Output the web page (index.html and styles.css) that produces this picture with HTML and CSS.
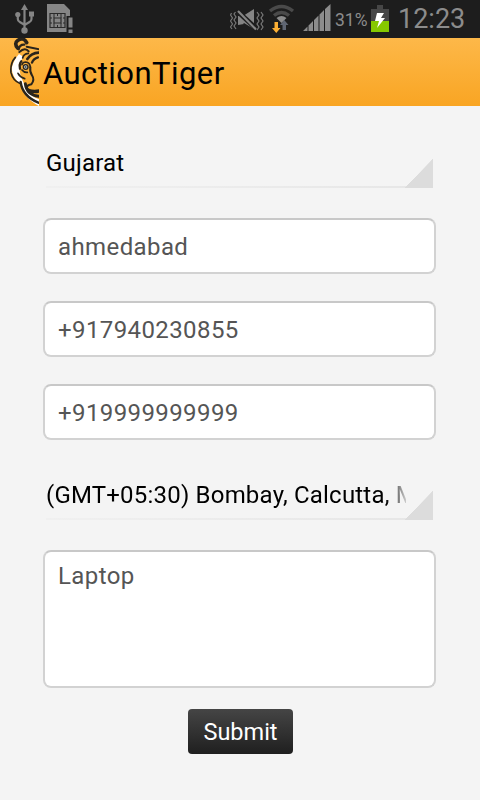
FILE: index.html
```html
<!DOCTYPE html>
<html lang="en">
<head>
    <meta charset="UTF-8">
    <meta name="viewport" content="width=device-width, initial-scale=1.0">
    <title>AuctionTiger</title>
    <link rel="stylesheet" href="styles.css">
</head>
<body>
    <div class="status-bar">
        <svg class="usb" width="20" height="30" viewBox="0 0 20 30">
            <g fill="none" stroke="#858585" stroke-width="2.2">
                <path d="M9.500 4v21M2.800 11v4q0 2 2 3l5 3M16.500 9v6q0 2-2 3l-5 3"/>
            </g>
            <g fill="#858585">
                <path d="M9.500 0l3.500 6h-7z"/>
                <circle cx="2.800" cy="10.500" r="2.600"/>
                <path d="M14 7.500h5v5h-5z"/>
                <circle cx="9.500" cy="26.500" r="3.200"/>
            </g>
        </svg>
        <svg class="sim" width="27" height="30" viewBox="0 0 27 30">
            <path d="M0 0h17l6 6v6h-3.500v16h-19.500z" fill="#858585"/>
            <path d="M3 9.500h15v14h-15z" fill="none" stroke="#2b2b2b" stroke-width="1.200"/>
            <path d="M7 14h7v5h-7z" fill="none" stroke="#2b2b2b" stroke-width="1.200"/>
            <path d="M7 9.500v4.500M10.500 9.500v2.500M14 9.500v4.500M7 19v4.500M10.500 21v2.500M14 19v4.500M3 14h2M3 19h2M16 14h2M16 19h2" fill="none" stroke="#2b2b2b"/>
            <path d="M21.500 13.500h4v10h-4zM21.500 25.500h4v3.500h-4z" fill="#858585"/>
        </svg>
        <span class="spacer"></span>
        <svg class="vibrate" width="34" height="24" viewBox="0 0 34 24">
            <path d="M8 7h5l11-7v20l-10-6h-6z" fill="#858585"/>
            <path d="M6 1l20 18.500" stroke="#1d1d1d" stroke-width="5"/>
            <path d="M8 2l18 18.500" stroke="#858585" stroke-width="2.200"/>
            <path d="M8 8v8l6-1z" fill="#858585"/>
            <path d="M1.500 4l-1 2 2 3-2 3 2 3-2 3 1.500 2M5.500 3l-1.500 2 2 3-2 3 2 3-2 3 2 3M27 3l2 3-2 3 2 3-2 3 2 3-2 3M31 3l2 3-2 3 2 3-2 3 2 3-2 3" fill="none" stroke="#777" stroke-width="1.200"/>
        </svg>
        <svg class="wifi" width="28" height="30" viewBox="0 0 28 30">
            <g fill="none" stroke="#4a4a4a" stroke-width="3.400">
                <path d="M2 7q11.500-9 23 0"/>
                <path d="M6 11.500q7.500-6 15 0"/>
            </g>
            <path d="M8.500 14q5-4 10 0l-5 5z" fill="#8c8c8c"/>
            <path d="M6.500 18h3.500v6h2.500l-4.250 5-4.250-5h2.500z" fill="#fcb034"/>
            <path d="M14.500 26h3.500v-5h2.500l-4.250-5-4.250 5h2.500z" fill="#5f6673"/>
        </svg>
        <svg class="signal" width="28" height="28" viewBox="0 0 28 28">
            <path d="M0 27l4.500-4.500v4.500zM5.500 21.500l4.500-4.500v10h-4.500zM11 16l4.500-4.500v15.500h-4.500zM16.500 10.500l4.500-4.500v21h-4.500zM22 5l5.500-5v27h-5.500z" fill="#8c8c8c"/>
        </svg>
        <span class="percent">31%</span>
        <svg class="battery" width="18" height="28" viewBox="0 0 18 28">
            <path d="M6 0h6v4h6v12h-18v-12h6z" fill="#464646"/>
            <path d="M0 16h18v11h-18z" fill="#86c800"/>
            <path d="M6 8h7l-3 5h4l-8 10 2-7h-4z" fill="#fff"/>
        </svg>
        <span class="clock">12:23</span>
    </div>

    <div class="header">
        <svg class="logo" width="29" height="68" viewBox="6 6 87 204">
            <!-- white fur -->
            <path d="M33 54Q14 76 11 98q2 28 27 46 6 40 55 66v-20Q62 182 50 148L38 120 32 86 46 62z" fill="#fff"/>
            <g fill="none" stroke="#2a241b" stroke-linecap="round">
                <!-- ear -->
                <path d="M29 36Q17 22 30 13 46 2 56 20" stroke-width="11"/>
                <path d="M32 40q3-15 17-14" stroke-width="7"/>
                <!-- forehead stripes -->
                <path d="M34 48Q52 32 62 46" stroke-width="6"/>
                <path d="M56 32Q76 36 95 40" stroke-width="6"/>
                <path d="M44 66Q46 54 61 52" stroke-width="5"/>
                <path d="M58 69Q70 51 92 50" stroke-width="8"/>
                <path d="M72 80Q76 68 90 64" stroke-width="7"/>
                <!-- cheek -->
                <path d="M22 64Q6 82 9 110q6 24 26 32" stroke-width="5"/>
                <path d="M40 76Q33 84 36 98" stroke-width="7"/>
                <path d="M30 112q6 12 20 16" stroke-width="5"/>
                <path d="M42 86Q44 78 53 78 66 79 67 94" stroke-width="5"/>
                <path d="M42 102q6 8 16 7" stroke-width="5"/>
                <!-- muzzle -->
                <path d="M67 94q-2 14 5 24 9 14-2 27-15 3-14 12" stroke-width="6"/>
                <path d="M38 138q5 42 53 62" stroke-width="7"/>
                <path d="M52 143q4 34 40 38" stroke-width="9"/>
            </g>
            <path d="M56 152q8 12 37 8v10q-26 8-37-18z" fill="#2a241b"/>
            <!-- eye -->
            <circle cx="53" cy="93" r="7" fill="#b4c6ce" stroke="#2a241b" stroke-width="4"/>
            <circle cx="53" cy="93" r="2.500" fill="#2a241b"/>
        </svg>
        <h1>AuctionTiger</h1>
    </div>

    <form class="container">
        <div class="spinner"><span class="spinner-text">Gujarat</span></div>
        <input type="text" value="ahmedabad">
        <input type="text" value="+917940230855">
        <input type="text" value="+919999999999">
        <div class="spinner"><span class="spinner-text timezone">(GMT+05:30) Bombay, Calcutta, M</span></div>
        <textarea>Laptop</textarea>
        <button type="button">Submit</button>
    </form>
</body>
</html>
```

FILE: styles.css
```css
* {
    box-sizing: border-box;
}

body {
    margin: 0;
    height: 800px;
    overflow: hidden;
    font-family: Roboto, sans-serif;
    background-color: #f4f4f4;
    color: #000;
}

.status-bar {
    display: flex;
    height: 38px;
    padding: 4px 16px 0 15px;
    background-color: #1d1d1d;
    color: #8c8c8c;
}

.sim {
    margin-left: 12px;
}

.spacer {
    flex: 1;
}

.vibrate {
    margin: 5px 4px 0 0;
}

.wifi {
    margin-right: 7px;
}

.signal {
    margin-right: 4px;
}

.percent {
    width: 33px;
    margin-right: 3px;
    font-size: 17.5px;
    line-height: 32px;
    white-space: nowrap;
}

.battery {
    margin: 1px 9px 0 0;
}

.clock {
    width: 66px;
    font-size: 27px;
    line-height: 30px;
    white-space: nowrap;
}

.header {
    display: flex;
    height: 68px;
    padding-left: 10px;
    background: linear-gradient(#fdb849, #f9a523);
}

.logo {
    margin-right: 4px;
}

h1 {
    margin: 0;
    font-size: 31px;
    font-weight: 400;
    line-height: 71px;
    letter-spacing: 0.45px;
}

.container {
    display: flex;
    flex-direction: column;
    padding: 32px 44px 0 43px;
}

.spinner {
    display: flex;
    height: 50px;
    margin: 0 3px 30px;
    background:
        linear-gradient(to top left, #dcdcdc 50%, transparent 51%) right bottom / 28px 29px no-repeat,
        linear-gradient(to right, #f0f0f0, #e6e6e6) left bottom / 100% 2px no-repeat;
}

.spinner-text {
    width: 360px;
    overflow: hidden;
    font-size: 24px;
    line-height: 50px;
    letter-spacing: 0.2px;
    white-space: nowrap;
}

.timezone {
    -webkit-mask-image: linear-gradient(to right, #000 340px, transparent 364px);
    mask-image: linear-gradient(to right, #000 340px, transparent 364px);
}

input, textarea {
    display: block;
    width: 100%;
    height: 56px;
    margin: 0 0 27px;
    padding: 2px 13px 0;
    border: 2px solid #d2d2d2;
    border-top-color: #c8c8c8;
    border-radius: 8px;
    background-color: #fff;
    color: #555;
    font-family: inherit;
    font-size: 24px;
    letter-spacing: 0.4px;
    outline: none;
}

input:nth-of-type(3) {
    margin-bottom: 30px;
}

textarea {
    height: 138px;
    margin-bottom: 21px;
    padding-top: 10px;
    resize: none;
}

button {
    width: 105px;
    height: 45px;
    margin-left: 145px;
    padding: 0;
    border: 0;
    border-radius: 4px;
    background: linear-gradient(#454545, #1f1f1f);
    color: #fff;
    font-family: inherit;
    font-size: 23.5px;
}
```
